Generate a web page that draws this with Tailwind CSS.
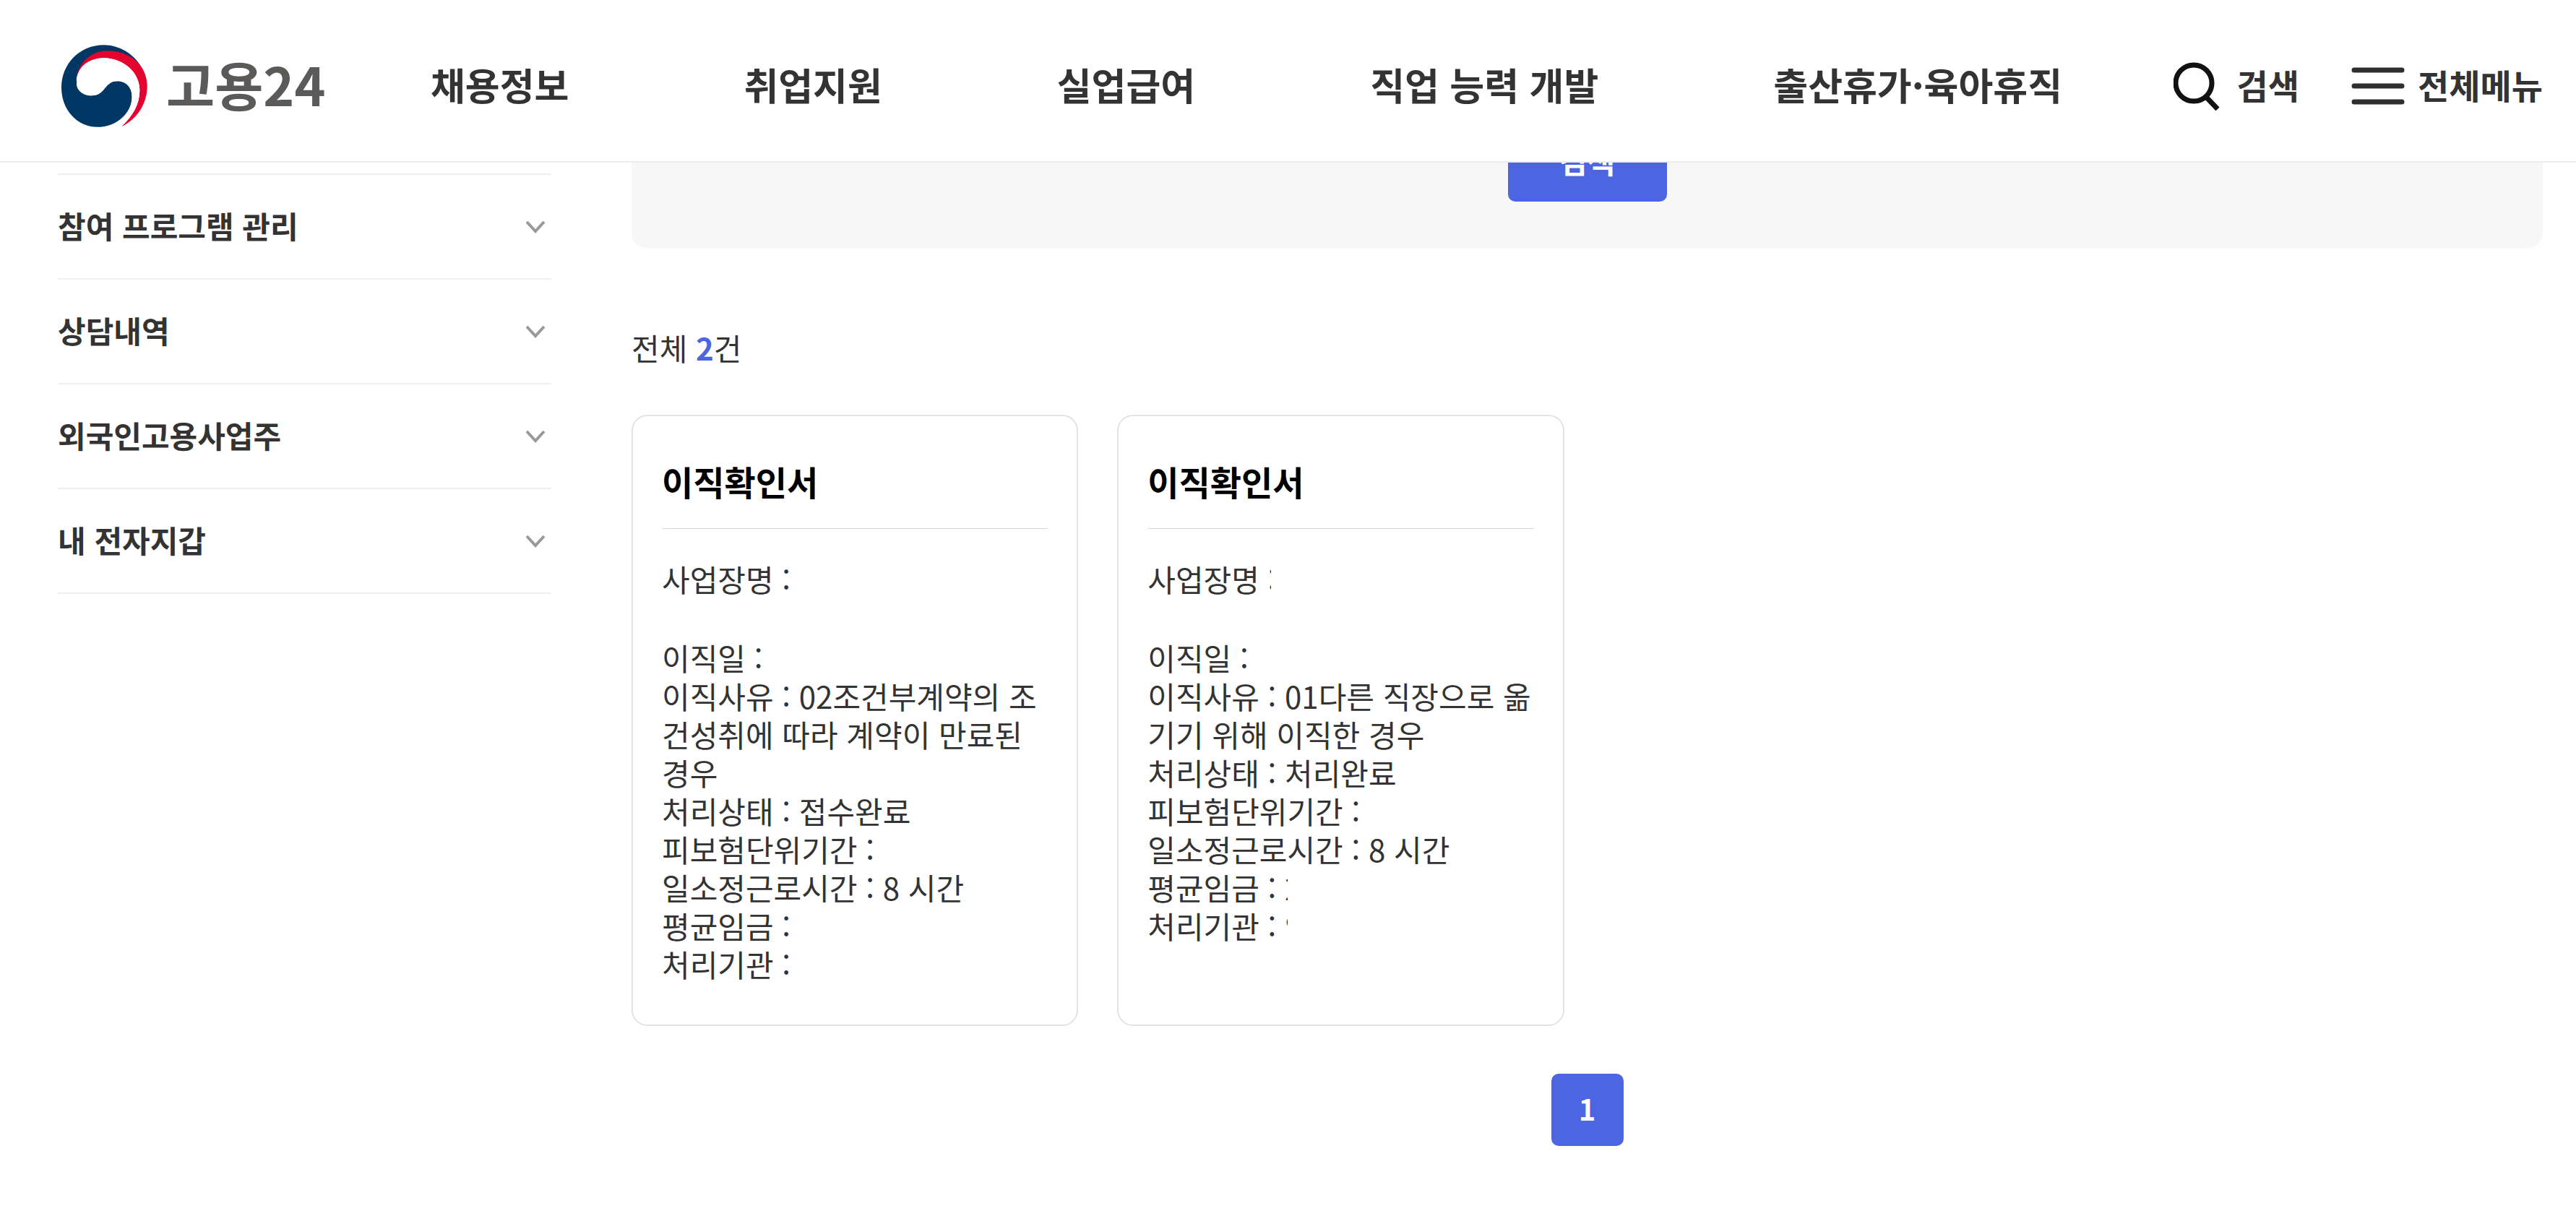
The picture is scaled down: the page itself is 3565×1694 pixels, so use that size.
<!DOCTYPE html>
<html lang="ko">
<head>
    <meta charset="utf-8">
    <title>고용24</title>
    <script src="https://cdn.jsdelivr.net/npm/@tailwindcss/browser@4"></script>
</head>

<body class="bg-white text-[#333] font-['Noto_Sans_CJK_KR',sans-serif]">
    <header class="fixed inset-x-0 top-0 z-10 flex h-[225px] items-center border-b-2 border-[#ededed] bg-white pt-[14px] pr-[46px] pb-0 pl-[85px] whitespace-nowrap">
        <a href="#" class="flex w-[511px] shrink-0 items-center gap-[26px] text-[73px] leading-[100px] font-bold text-[#5b5a59]">
            <svg class="h-[114px] w-[119px]" viewBox="46 38 356 340" fill="none" aria-hidden="true">
                <path fill="#003764" d="M109 190C105 225 135 248 170 248C230 248 222 188 278 188C315 188 338 215 338 252C338 320 275 378 195 378C110 378 46 305 46 215C46 115 122 38 222 38C285 38 345 75 374 125L235 80Z" />
                <path fill="#fff" d="M109 190C105 150 150 85 225 85C300 85 370 130 372 225L300 190L170 150Z" />
                <path fill="#e4032e" d="M111 165C122 105 175 62 235 62C285 62 330 78 364 112C388 138 401 172 401 210C401 280 360 345 295 376C342 330 370 285 370 225C370 150 300 92 222 92C172 92 130 122 111 165Z" />
                <path fill="#fff" d="M109 190C108 130 160 92 222 92C300 92 370 150 370 225C370 285 342 330 295 376L270 365C315 340 338 300 338 252C338 215 315 188 278 188C222 188 230 248 170 248C135 248 107 225 109 190Z" />
            </svg>
            <span class="pb-[8px]">고용24</span>
        </a>
        <nav class="flex gap-[242px] pb-[4px] text-[52px] leading-[76px] font-bold">
            <a href="#">채용정보</a>
            <a href="#">취업지원</a>
            <a href="#">실업급여</a>
            <a href="#">직업 능력 개발</a>
            <a href="#">출산휴가·육아휴직</a>
        </nav>
        <div class="ml-auto flex gap-[72px] text-[47px] leading-[68px] font-bold">
            <button type="button" class="flex items-center gap-[20px]">
                <svg class="size-[68px]" viewBox="0 0 68 68" fill="none" stroke="#111" stroke-width="7" aria-hidden="true">
                    <circle cx="28" cy="30" r="25" />
                    <path d="M44 48L61 66" />
                </svg>
                <span class="pb-[4px]">검색</span>
            </button>
            <button type="button" class="flex items-center gap-[18px]">
                <svg class="h-[52px] w-[74px]" viewBox="0 0 74 52" stroke="#2f2f2f" stroke-width="7" stroke-linecap="round" aria-hidden="true">
                    <path d="M4 4H70M4 26H70M4 48H70" />
                </svg>
                <span class="pb-[4px]">전체메뉴</span>
            </button>
        </div>
    </header>

    <div class="flex items-start gap-[111px] pr-[46px] pl-[80px]">
        <aside class="w-[683px] shrink-0 pt-[240px] text-[42px] leading-[60px] font-bold">
            <ul class="border-t-2 border-[#efefef]">
                <li class="border-b-2 border-[#efefef]">
                    <button type="button" class="flex h-[143px] w-full items-center justify-between pr-[8px]">
                        <span class="pb-[4px]">참여 프로그램 관리</span>
                        <svg class="h-[18px] w-[28px]" viewBox="0 0 28 18" fill="none" stroke="#999" stroke-width="4" aria-hidden="true"><path d="M2 2L14 15L26 2" /></svg>
                    </button>
                </li>
                <li class="border-b-2 border-[#efefef]">
                    <button type="button" class="flex h-[143px] w-full items-center justify-between pr-[8px]">
                        <span class="pb-[4px]">상담내역</span>
                        <svg class="h-[18px] w-[28px]" viewBox="0 0 28 18" fill="none" stroke="#999" stroke-width="4" aria-hidden="true"><path d="M2 2L14 15L26 2" /></svg>
                    </button>
                </li>
                <li class="border-b-2 border-[#efefef]">
                    <button type="button" class="flex h-[143px] w-full items-center justify-between pr-[8px]">
                        <span class="pb-[4px]">외국인고용사업주</span>
                        <svg class="h-[18px] w-[28px]" viewBox="0 0 28 18" fill="none" stroke="#999" stroke-width="4" aria-hidden="true"><path d="M2 2L14 15L26 2" /></svg>
                    </button>
                </li>
                <li class="border-b-2 border-[#efefef]">
                    <button type="button" class="flex h-[143px] w-full items-center justify-between pr-[8px]">
                        <span class="pb-[4px]">내 전자지갑</span>
                        <svg class="h-[18px] w-[28px]" viewBox="0 0 28 18" fill="none" stroke="#999" stroke-width="4" aria-hidden="true"><path d="M2 2L14 15L26 2" /></svg>
                    </button>
                </li>
            </ul>
        </aside>

        <main class="min-w-0 flex-1">
            <!-- search form, scrolled under the header -->
            <form class="flex justify-center rounded-b-[22px] bg-[#f7f7f7] pt-[169px] pb-[65px]">
                <button type="button" class="h-[110px] w-[220px] rounded-[10px] bg-[#4d65e0] pb-[4px] text-[42px] leading-[60px] font-bold text-white">검색</button>
            </form>

            <p class="mt-[110px] text-[42px] leading-[53px]">전체 <strong class="font-bold text-[#4d65e0]">2</strong>건</p>

            <div class="mt-[67px] grid grid-cols-4 gap-[54px] pr-[10px]">
                <article class="rounded-[22px] border-2 border-[#e3e3e3] px-[40px] pt-[56px] pb-[58px]">
                    <h2 class="border-b border-[#d8d8d8] pb-[31px] text-[47px] leading-[68px] font-bold text-black">이직확인서</h2>
                    <div class="mt-[42px] text-[42px] leading-[53px]">
                        <p>사업장명 :</p>
                        <p class="mt-[56px]">이직일 :</p>
                        <p>이직사유 : 02조건부계약의 조건성취에 따라 계약이 만료된 경우</p>
                        <p>처리상태 : 접수완료</p>
                        <p>피보험단위기간 :</p>
                        <p>일소정근로시간 : 8 시간</p>
                        <p>평균임금 :</p>
                        <p>처리기관 :</p>
                    </div>
                </article>
                <article class="rounded-[22px] border-2 border-[#e3e3e3] px-[40px] pt-[56px] pb-[58px]">
                    <h2 class="border-b border-[#d8d8d8] pb-[31px] text-[47px] leading-[68px] font-bold text-black">이직확인서</h2>
                    <div class="mt-[42px] text-[42px] leading-[53px]">
                        <p class="flex">사업장명&nbsp;<span class="w-[4px] overflow-hidden">:</span></p>
                        <p class="mt-[56px]">이직일 :</p>
                        <p>이직사유 : 01다른 직장으로 옮기기 위해 이직한 경우</p>
                        <p>처리상태 : 처리완료</p>
                        <p>피보험단위기간 :</p>
                        <p>일소정근로시간 : 8 시간</p>
                        <p class="flex">평균임금 :&nbsp;<span class="w-[4px] overflow-hidden">2</span></p>
                        <p class="flex">처리기관 :&nbsp;<span class="w-[4px] overflow-hidden whitespace-nowrap">안</span></p>
                    </div>
                </article>
            </div>

            <nav class="mt-[66px] mb-[108px] flex justify-center">
                <a href="#" aria-current="page" class="flex size-[100px] items-center justify-center rounded-[10px] bg-[#4d65e0] pb-[4px] text-[40px] leading-[60px] font-bold text-white">1</a>
            </nav>
        </main>
    </div>
</body>
</html>
